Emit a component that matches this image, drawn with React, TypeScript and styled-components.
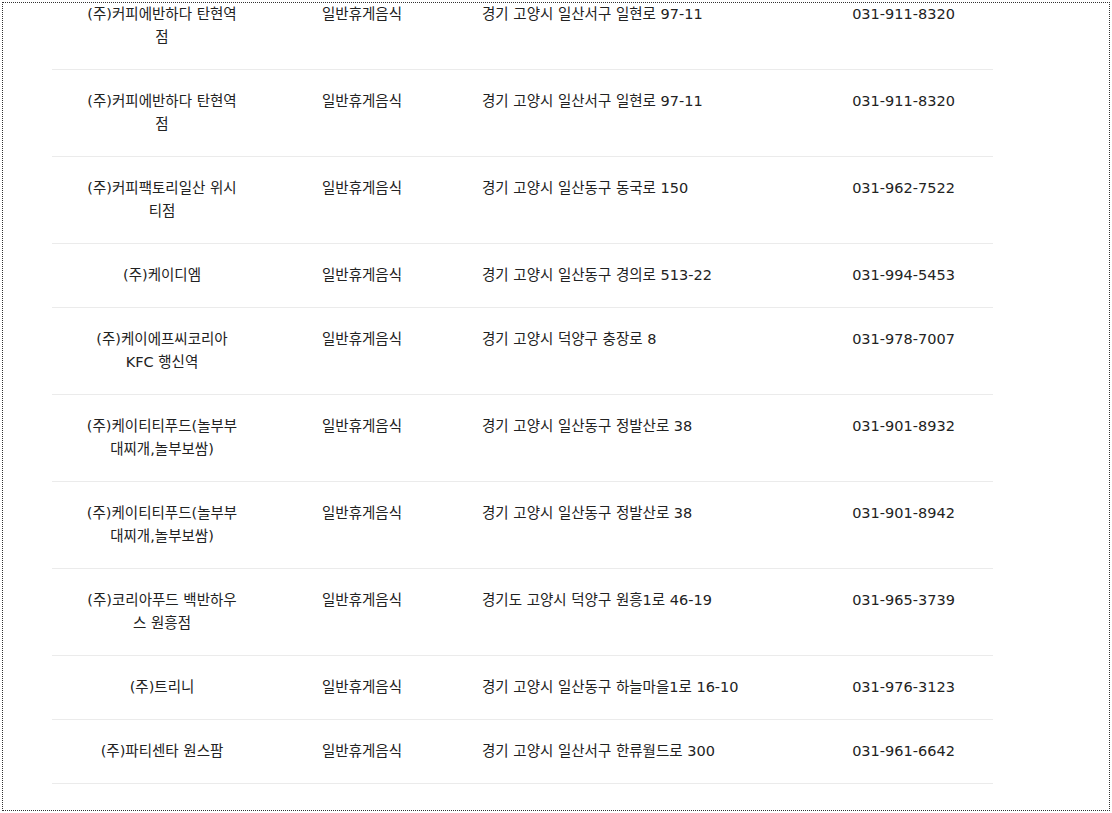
import React, { useLayoutEffect, useRef } from "react";
import styled, { createGlobalStyle } from "styled-components";

const GlobalStyle = createGlobalStyle`
  html, body {
    margin: 0;
    padding: 0;
    background: #ffffff;
  }
  body {
    font-family: "DejaVu Sans", "Noto Sans CJK KR", sans-serif;
    color: #222222;
  }
`;

const Frame = styled.div`
  box-sizing: border-box;
  margin: 2px;
  width: 1108px;
  height: 809px;
  border: 1px dotted #333333;
  overflow: hidden;
`;

const Table = styled.table`
  margin-left: 49px;
  width: 941px;
  border-collapse: collapse;
  table-layout: fixed;
  font-size: 14.5px;
  line-height: 23px;
`;

const Col = styled.col<{ $w: number }>`
  width: ${(p) => p.$w}px;
`;

const Row = styled.tr`
  border-bottom: 1px solid #ebebeb;
`;

const Cell = styled.td<{ $align?: "left" | "center"; $padX?: number }>`
  padding: 20px ${(p) => p.$padX ?? 30}px;
  vertical-align: top;
  text-align: ${(p) => p.$align ?? "center"};
`;

const BottomSpace = styled.div`
  height: 200px;
`;

type Shop = { name: string; kind: string; addr: string; tel: string };

const shops: Shop[] = [
  { name: "(주)커피에반하다 탄현역점", kind: "일반휴게음식", addr: "경기 고양시 일산서구 일현로 97-11", tel: "031-911-8320" },
  { name: "(주)커피에반하다 탄현역점", kind: "일반휴게음식", addr: "경기 고양시 일산서구 일현로 97-11", tel: "031-911-8320" },
  { name: "(주)커피팩토리일산 위시티점", kind: "일반휴게음식", addr: "경기 고양시 일산동구 동국로 150", tel: "031-962-7522" },
  { name: "(주)케이디엠", kind: "일반휴게음식", addr: "경기 고양시 일산동구 경의로 513-22", tel: "031-994-5453" },
  { name: "(주)케이에프씨코리아 KFC 행신역", kind: "일반휴게음식", addr: "경기 고양시 덕양구 충장로 8", tel: "031-978-7007" },
  { name: "(주)케이티티푸드(놀부부대찌개,놀부보쌈)", kind: "일반휴게음식", addr: "경기 고양시 일산동구 정발산로 38", tel: "031-901-8932" },
  { name: "(주)케이티티푸드(놀부부대찌개,놀부보쌈)", kind: "일반휴게음식", addr: "경기 고양시 일산동구 정발산로 38", tel: "031-901-8942" },
  { name: "(주)코리아푸드 백반하우스 원흥점", kind: "일반휴게음식", addr: "경기도 고양시 덕양구 원흥1로 46-19", tel: "031-965-3739" },
  { name: "(주)트리니", kind: "일반휴게음식", addr: "경기 고양시 일산동구 하늘마을1로 16-10", tel: "031-976-3123" },
  { name: "(주)파티센타 원스팜", kind: "일반휴게음식", addr: "경기 고양시 일산서구 한류월드로 300", tel: "031-961-6642" },
];

export default function App() {
  const frameRef = useRef<HTMLDivElement>(null);
  useLayoutEffect(() => {
    if (frameRef.current) frameRef.current.scrollTop = 20;
  }, []);
  return (
    <>
      <GlobalStyle />
      <Frame ref={frameRef}>
        <Table>
          <colgroup>
            <Col $w={220} />
            <Col $w={180} />
            <Col $w={362} />
            <Col $w={179} />
          </colgroup>
          <tbody>
            {shops.map((s, i) => (
              <Row key={i}>
                <Cell $padX={32}>{s.name}</Cell>
                <Cell>{s.kind}</Cell>
                <Cell $align="left">{s.addr}</Cell>
                <Cell>{s.tel}</Cell>
              </Row>
            ))}
          </tbody>
        </Table>
        <BottomSpace />
      </Frame>
    </>
  );
}
